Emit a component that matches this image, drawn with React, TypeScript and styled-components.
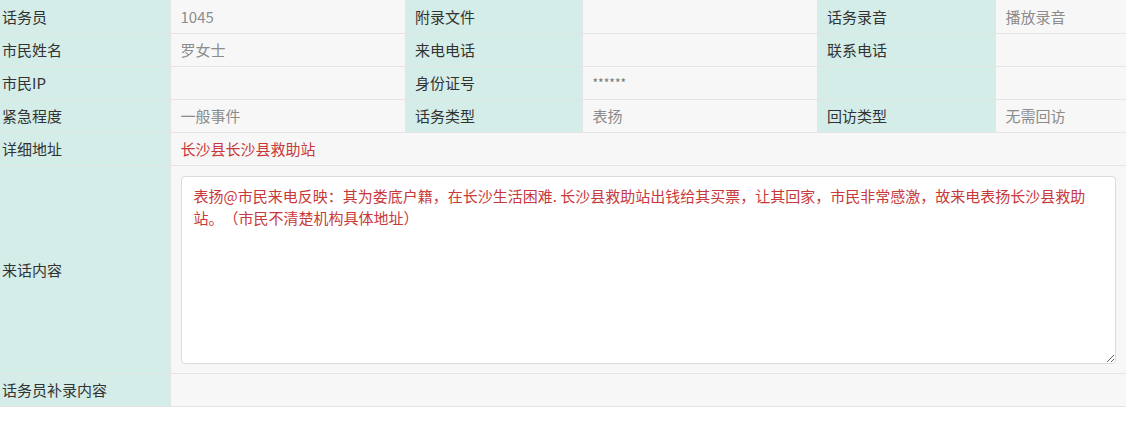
import React from "react";
import styled, { createGlobalStyle } from "styled-components";

const Global = createGlobalStyle`
  html, body { margin: 0; padding: 0; background: #ffffff; }
  body { font-family: "Noto Sans CJK SC", "Noto Sans", sans-serif; }
`;

const Table = styled.table`
  width: 1126px;
  table-layout: fixed;
  border-collapse: collapse;
  font-size: 15px;
`;

const Row = styled.tr<{ $tall?: boolean }>`
  height: ${(p) => (p.$tall ? "207px" : "33px")};
  border-bottom: 1px solid #e3e5e4;
`;

const Label = styled.td<{ $first?: boolean }>`
  background: #d4ede8;
  color: #333333;
  padding: 0 0 0 ${(p) => (p.$first ? "2px" : "10px")};
  white-space: nowrap;
  vertical-align: middle;
`;

const Value = styled.td<{ $tone?: "red" | "gray" | "dim" }>`
  background: #f7f7f7;
  color: ${(p) => (p.$tone === "red" ? "#c8393b" : p.$tone === "dim" ? "#777" : "#8c8c8c")};
  font-size: ${(p) => (p.$tone === "dim" ? "12px" : "15px")};
  padding: 0 10px;
  border-left: 1px solid #e5e5e5;
  white-space: nowrap;
  vertical-align: middle;
`;

const BoxCell = styled.td`
  background: #f7f7f7;
  padding: 10px 10px 9px;
  border-left: 1px solid #e5e5e5;
`;

const Content = styled.textarea`
  display: block;
  box-sizing: border-box;
  width: 100%;
  height: 188px;
  margin: 0;
  padding: 8px 20px 8px 12px;
  border: 1px solid #dcdcdc;
  border-radius: 4px;
  background: #ffffff;
  color: #c8393b;
  font-family: "Noto Sans CJK SC", "Noto Sans", sans-serif;
  font-size: 15px;
  line-height: 22px;
  text-spacing-trim: space-all;
  overflow: hidden;
  outline: none;
`;

const text =
  "表扬@市民来电反映：其为娄底户籍，在长沙生活困难. 长沙县救助站出钱给其买票，让其回家，市民非常感激，故来电表扬长沙县救助站。（市民不清楚机构具体地址）";

export default function App() {
  return (
    <>
      <Global />
      <Table>
        <colgroup>
          <col style={{ width: 170 }} />
          <col style={{ width: 235 }} />
          <col style={{ width: 177 }} />
          <col style={{ width: 235 }} />
          <col style={{ width: 178 }} />
          <col style={{ width: 131 }} />
        </colgroup>
        <tbody>
          <Row>
            <Label $first>话务员</Label>
            <Value>1045</Value>
            <Label>附录文件</Label>
            <Value />
            <Label>话务录音</Label>
            <Value>播放录音</Value>
          </Row>
          <Row>
            <Label $first>市民姓名</Label>
            <Value>罗女士</Value>
            <Label>来电电话</Label>
            <Value />
            <Label>联系电话</Label>
            <Value />
          </Row>
          <Row>
            <Label $first>市民IP</Label>
            <Value />
            <Label>身份证号</Label>
            <Value $tone="dim">******</Value>
            <Label />
            <Value />
          </Row>
          <Row>
            <Label $first>紧急程度</Label>
            <Value>一般事件</Value>
            <Label>话务类型</Label>
            <Value>表扬</Value>
            <Label>回访类型</Label>
            <Value>无需回访</Value>
          </Row>
          <Row>
            <Label $first>详细地址</Label>
            <Value $tone="red" colSpan={5}>
              长沙县长沙县救助站
            </Value>
          </Row>
          <Row $tall>
            <Label $first>来话内容</Label>
            <BoxCell colSpan={5}>
              <Content readOnly defaultValue={text} />
            </BoxCell>
          </Row>
          <Row>
            <Label $first>话务员补录内容</Label>
            <Value colSpan={5} />
          </Row>
        </tbody>
      </Table>
    </>
  );
}
